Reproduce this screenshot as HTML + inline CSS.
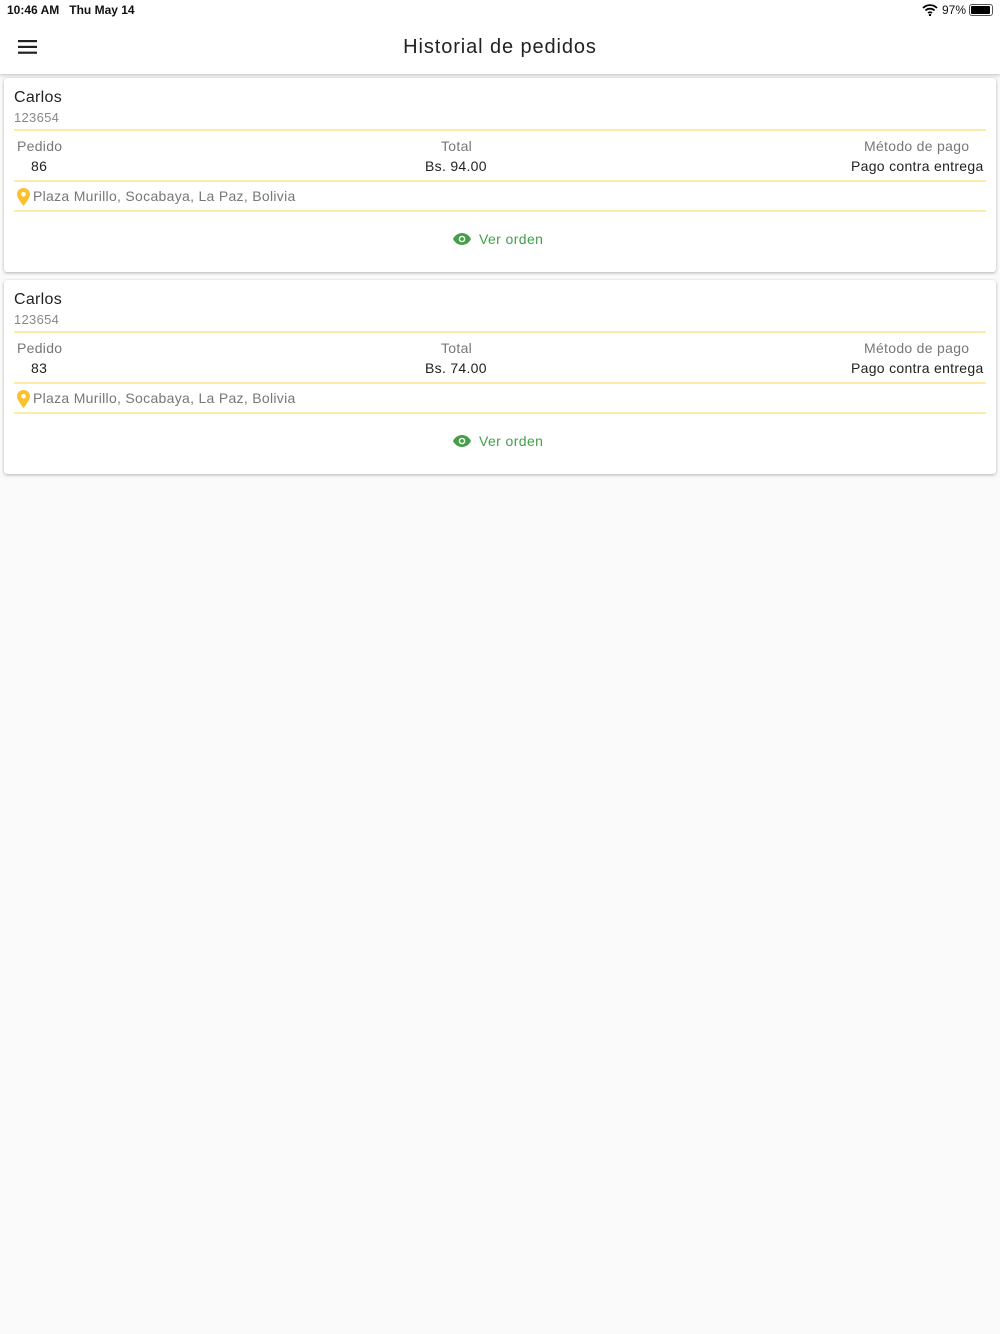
<!DOCTYPE html>
<html><head><meta charset="utf-8"><style>
*{margin:0;padding:0;box-sizing:border-box}
body{width:1000px;height:1334px;background:#fafafa;font-family:"Liberation Sans",sans-serif;position:relative;overflow:hidden}
.abs{position:absolute;white-space:nowrap}
.bar{position:absolute;left:0;top:0;width:1000px;height:74px;background:#fff;box-shadow:0 1px 4px rgba(0,0,0,.25)}
.card{position:absolute;left:4px;width:992px;height:194px;background:#fff;border-radius:3px;box-shadow:0 1px 3px rgba(0,0,0,.3)}
.div{position:absolute;left:10px;width:972px;height:2px;background:#fdeaa8}
.g{color:#777;font-size:14px;letter-spacing:.3px}
.d{color:#222;font-size:14px;letter-spacing:.3px}
</style></head><body>
<div class="bar"></div>
<div class="abs" style="left:7px;top:3px;font-size:12px;font-weight:bold;color:#111">10:46 AM&nbsp;&nbsp;&nbsp;Thu May 14</div>
<svg class="abs" style="left:922px;top:4px" width="16" height="12" viewBox="0 0 16 12"><path d="M1 4a10 10 0 0 1 14 0M3.5 6.5a6.5 6.5 0 0 1 9 0M6 9a3 3 0 0 1 4 0" stroke="#000" stroke-width="1.8" fill="none"/><circle cx="8" cy="11" r="1.2"/></svg>
<div class="abs" style="left:942px;top:3px;font-size:12px;color:#111">97%</div>
<div class="abs" style="left:969px;top:4px;width:24px;height:12px;border:1px solid #555;border-radius:3px;padding:1px"><div style="width:19px;height:8px;background:#000;border-radius:1px"></div></div>
<svg class="abs" style="left:18px;top:40px" width="19" height="14"><rect y="0" width="19" height="2.2" fill="#222"/><rect y="5.8" width="19" height="2.2" fill="#222"/><rect y="11.6" width="19" height="2.2" fill="#222"/></svg>
<div class="abs" style="left:0;width:1000px;text-align:center;top:36px;font-size:20px;letter-spacing:.9px;color:#222">Historial de pedidos</div>

<div class="card" style="top:78px">
<div class="abs d" style="left:10px;top:11px;font-size:16px">Carlos</div>
<div class="abs g" style="left:10px;top:32px;font-size:13px;color:#888">123654</div>
<div class="div" style="top:51px"></div>
<div class="abs g" style="left:13px;top:60px">Pedido</div>
<div class="abs d" style="left:27px;top:80px">86</div>
<div class="abs g" style="left:437px;top:60px">Total</div>
<div class="abs d" style="left:421px;top:80px">Bs. 94.00</div>
<div class="abs g" style="left:860px;top:60px">Método de pago</div>
<div class="abs d" style="left:847px;top:80px">Pago contra entrega</div>
<div class="div" style="top:102px"></div>
<svg class="abs" style="left:13px;top:110px" width="13" height="18" viewBox="0 0 13 18"><path d="M6.5 0C3 0 0 2.7 0 6.3 0 10.5 6.5 18 6.5 18S13 10.5 13 6.3C13 2.7 10 0 6.5 0z" fill="#fbc02d"/><circle cx="6.5" cy="6.3" r="2.3" fill="#fff"/></svg>
<div class="abs g" style="left:29px;top:110px">Plaza Murillo, Socabaya, La Paz, Bolivia</div>
<div class="div" style="top:132px"></div>
<svg class="abs" style="left:449px;top:155px" width="18" height="12" viewBox="0 0 18 12"><path d="M9 0C5 0 1.6 2.5 0 6c1.6 3.5 5 6 9 6s7.4-2.5 9-6C16.4 2.5 13 0 9 0z" fill="#43a047"/><circle cx="9" cy="6" r="3.3" fill="#fff"/><circle cx="9" cy="6" r="1.9" fill="#43a047"/></svg>
<div class="abs" style="left:475px;top:153px;font-size:14px;letter-spacing:.4px;color:#43a047">Ver orden</div>
</div>

<div class="card" style="top:280px">
<div class="abs d" style="left:10px;top:11px;font-size:16px">Carlos</div>
<div class="abs g" style="left:10px;top:32px;font-size:13px;color:#888">123654</div>
<div class="div" style="top:51px"></div>
<div class="abs g" style="left:13px;top:60px">Pedido</div>
<div class="abs d" style="left:27px;top:80px">83</div>
<div class="abs g" style="left:437px;top:60px">Total</div>
<div class="abs d" style="left:421px;top:80px">Bs. 74.00</div>
<div class="abs g" style="left:860px;top:60px">Método de pago</div>
<div class="abs d" style="left:847px;top:80px">Pago contra entrega</div>
<div class="div" style="top:102px"></div>
<svg class="abs" style="left:13px;top:110px" width="13" height="18" viewBox="0 0 13 18"><path d="M6.5 0C3 0 0 2.7 0 6.3 0 10.5 6.5 18 6.5 18S13 10.5 13 6.3C13 2.7 10 0 6.5 0z" fill="#fbc02d"/><circle cx="6.5" cy="6.3" r="2.3" fill="#fff"/></svg>
<div class="abs g" style="left:29px;top:110px">Plaza Murillo, Socabaya, La Paz, Bolivia</div>
<div class="div" style="top:132px"></div>
<svg class="abs" style="left:449px;top:155px" width="18" height="12" viewBox="0 0 18 12"><path d="M9 0C5 0 1.6 2.5 0 6c1.6 3.5 5 6 9 6s7.4-2.5 9-6C16.4 2.5 13 0 9 0z" fill="#43a047"/><circle cx="9" cy="6" r="3.3" fill="#fff"/><circle cx="9" cy="6" r="1.9" fill="#43a047"/></svg>
<div class="abs" style="left:475px;top:153px;font-size:14px;letter-spacing:.4px;color:#43a047">Ver orden</div>
</div>
</body></html>
